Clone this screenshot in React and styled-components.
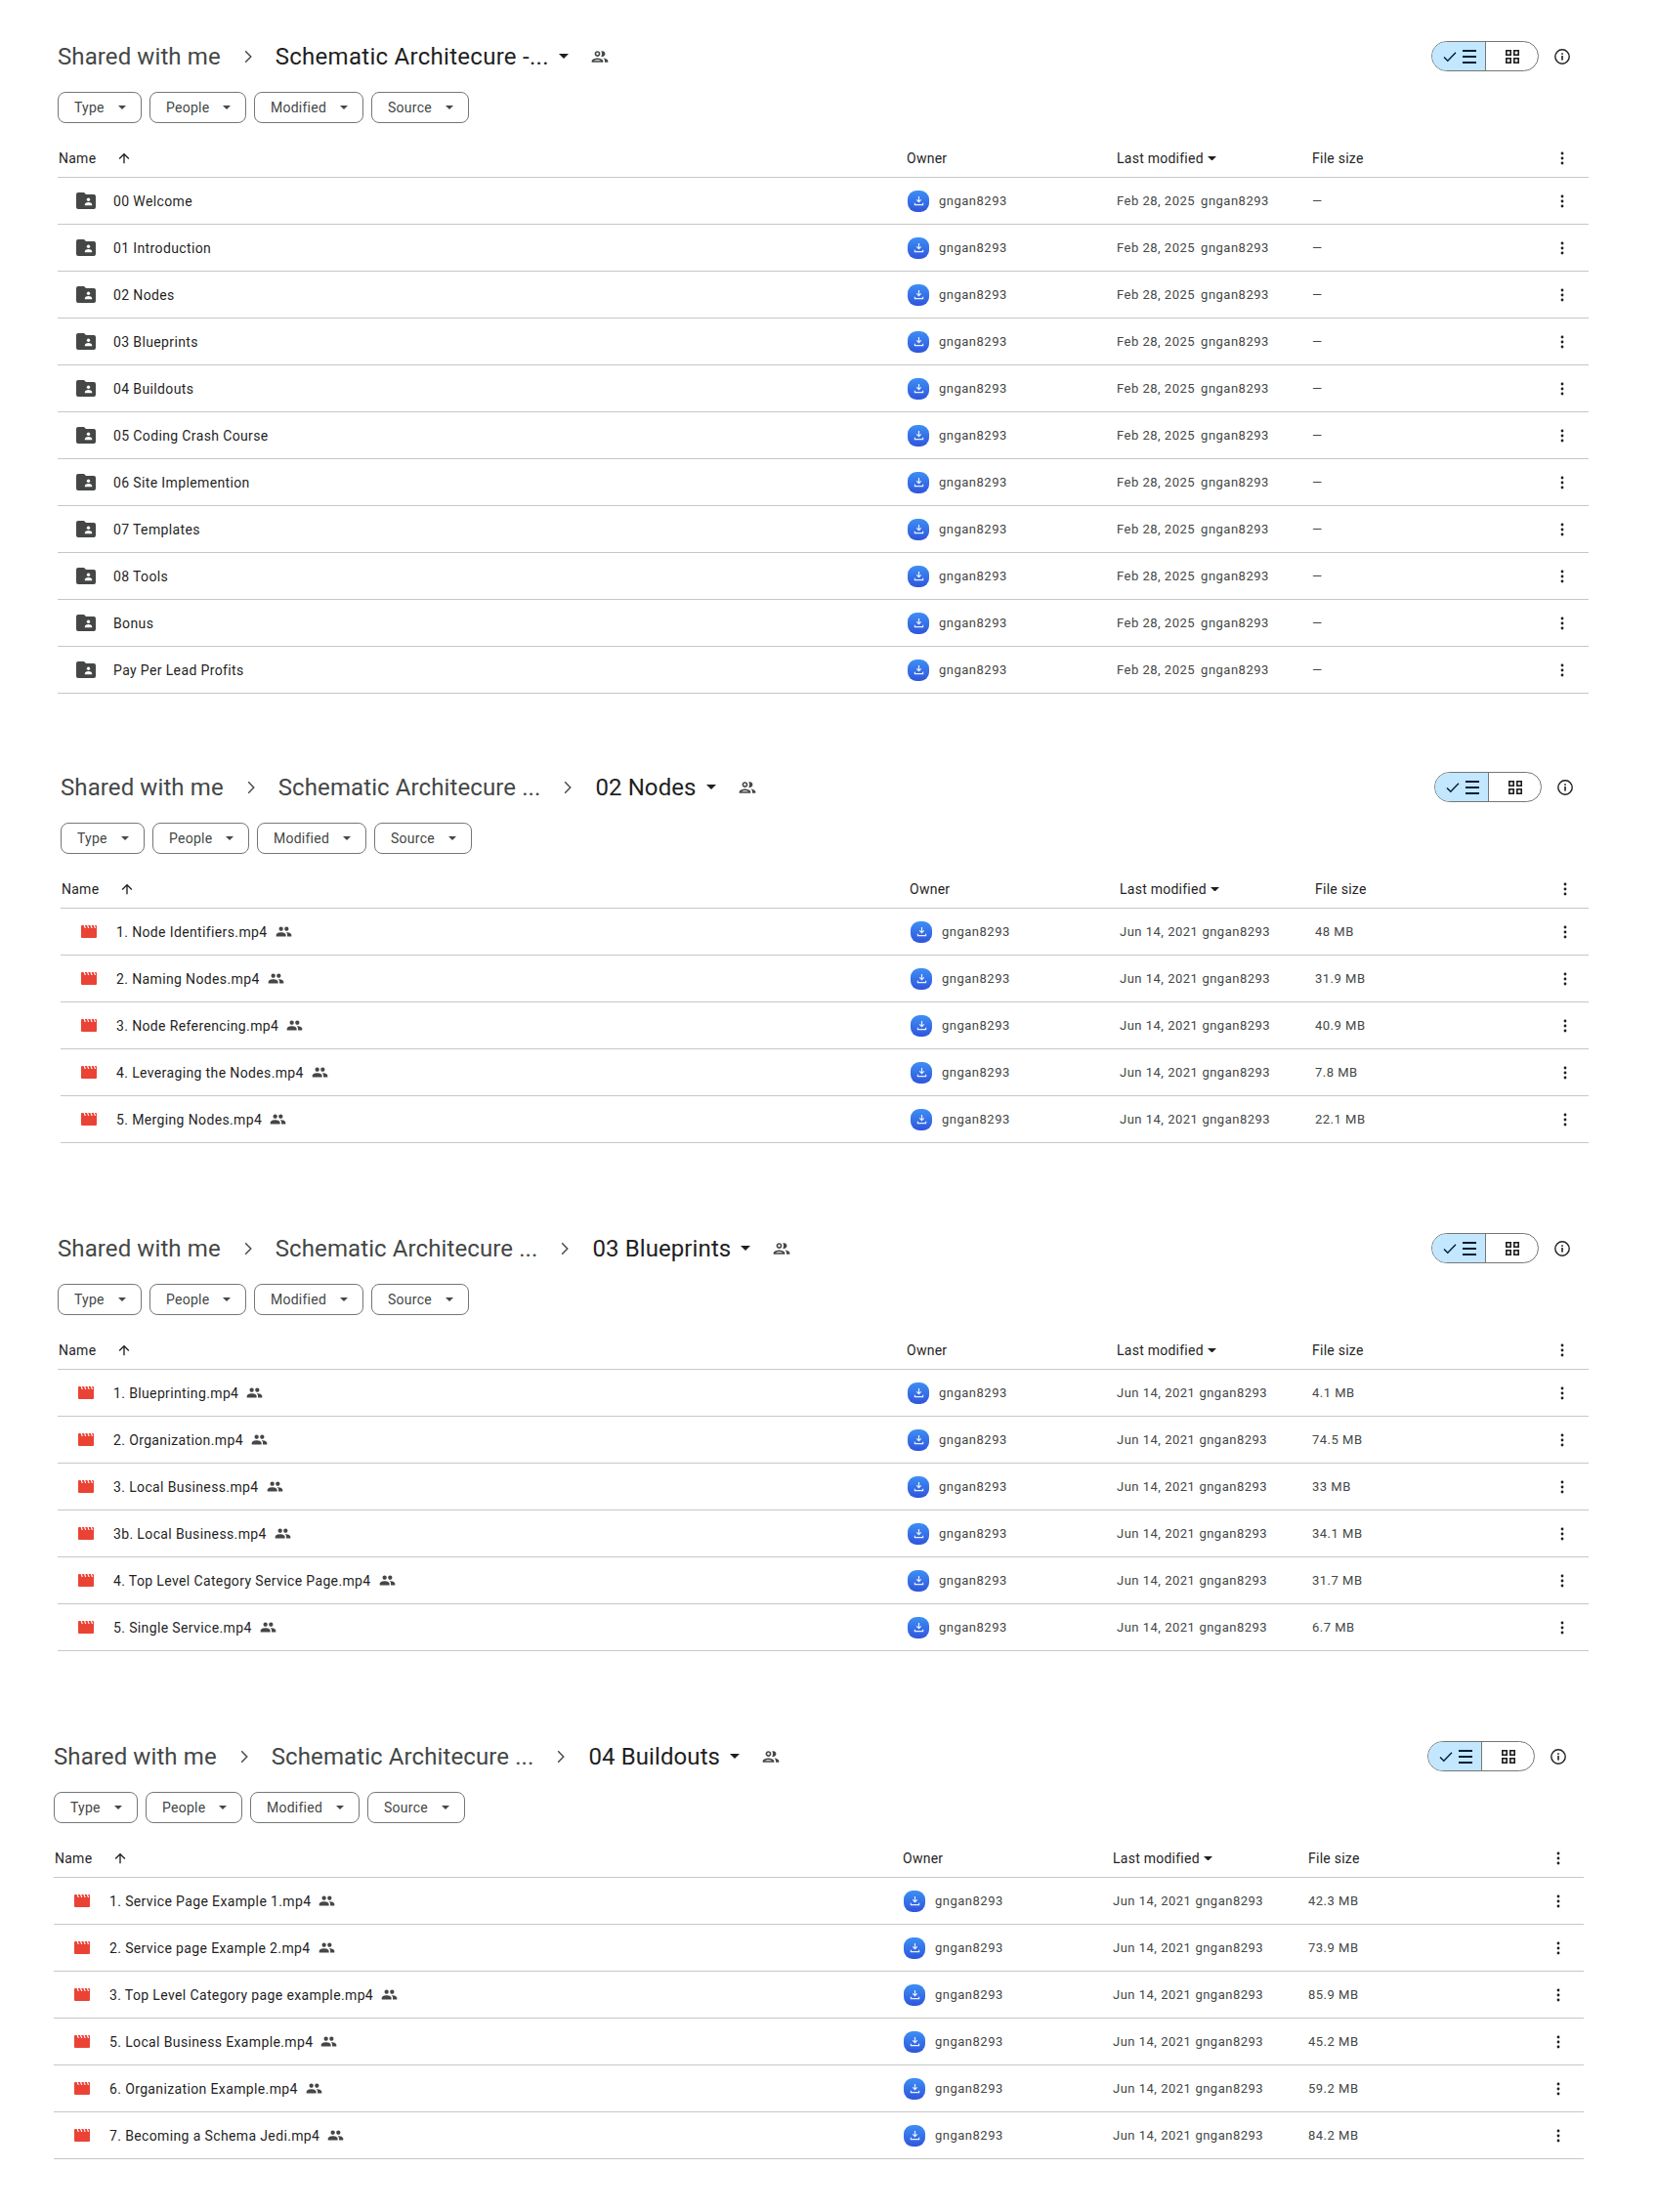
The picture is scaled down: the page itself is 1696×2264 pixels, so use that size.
import React from "react";
import styled, { createGlobalStyle } from "styled-components";

const GlobalStyle = createGlobalStyle`
  html, body {
    margin: 0;
    padding: 0;
    background: #fff;
    font-family: Roboto, "Liberation Sans", sans-serif;
  }
`;

const Page = styled.div`
  width: 1696px;
  height: 2264px;
  padding-top: 42px;
  box-sizing: border-box;
  overflow: hidden;
`;

const Section = styled.section`
  margin-top: ${(p) => p.$top}px;
  padding-left: ${(p) => p.$left}px;
  padding-right: ${(p) => p.$right}px;
`;

const TitleRow = styled.div`
  display: flex;
  align-items: center;
  height: 31px;
  padding-right: ${(p) => p.$kebab / 2 - 8}px;
`;

const Crumb = styled.span`
  font-size: 24px;
  letter-spacing: ${(p) => p.$spacing}px;
  line-height: 31px;
  padding-top: 1px;
  white-space: nowrap;
  color: ${(p) => (p.$current ? "#1f1f1f" : "#444746")};
`;

const ChevronBox = styled.span`
  width: 56px;
  display: flex;
  justify-content: center;
  color: #444746;
`;

const TitleCaret = styled.span`
  margin-left: 10px;
  display: flex;
  color: #1f1f1f;
`;

const ShareIcon = styled.span`
  margin-left: 22px;
  display: flex;
  color: #444746;
`;

const Spacer = styled.div`
  flex: 1;
`;

const Toggle = styled.div`
  display: flex;
  width: 110px;
  height: 31px;
  box-sizing: border-box;
  border: 1px solid #747775;
  border-radius: 16px;
  overflow: hidden;
  margin-right: 16px;
`;

const ToggleOn = styled.div`
  width: 55px;
  background: #c2e7ff;
  border-right: 1px solid #747775;
  display: flex;
  align-items: center;
  justify-content: center;
  gap: 6px;
  padding-left: 2px;
  box-sizing: border-box;
  color: #001d35;
`;

const ToggleOff = styled.div`
  flex: 1;
  display: flex;
  align-items: center;
  justify-content: center;
  color: #1f1f1f;
`;

const InfoBox = styled.span`
  display: flex;
  width: 16px;
  color: #1f1f1f;
`;

const Filters = styled.div`
  display: flex;
  gap: 8px;
  margin-top: 21px;
`;

const Chip = styled.div`
  height: 32px;
  width: ${(p) => p.$width}px;
  box-sizing: border-box;
  border: 1px solid #747775;
  border-radius: 8px;
  display: flex;
  align-items: center;
  justify-content: space-between;
  padding: 0 15px 0 16px;
  font-size: 14px;
  letter-spacing: 0.25px;
  color: #444746;
`;

const ChipCaret = styled.span`
  display: flex;
  color: #444746;
`;

const HeaderRow = styled.div`
  display: grid;
  grid-template-columns: 869px 215px 200px 1fr ${(p) => p.$kebab}px;
  height: 56px;
  box-sizing: border-box;
  align-items: end;
  padding-bottom: 9px;
  border-bottom: 1px solid #c7c7c7;
  font-size: 14px;
  letter-spacing: 0.25px;
  line-height: 20px;
  color: #1f1f1f;
`;

const HeaderName = styled.div`
  display: flex;
  align-items: center;
  gap: 21px;
  padding-left: 1px;
`;

const HeaderSort = styled.div`
  display: flex;
  align-items: center;
  gap: 4px;
`;

const Row = styled.div`
  display: grid;
  grid-template-columns: 869px 215px 200px 1fr ${(p) => p.$kebab}px;
  height: 48px;
  box-sizing: border-box;
  align-items: center;
  border-bottom: 1px solid #c7c7c7;
  font-size: 13px;
  letter-spacing: 0.5px;
  color: #444746;
`;

const NameCell = styled.div`
  display: flex;
  align-items: center;
  font-size: 14px;
  letter-spacing: 0.37px;
  color: #1f1f1f;
`;

const IconSlot = styled.span`
  width: 57px;
  padding-left: 1px;
  box-sizing: border-box;
  display: flex;
  justify-content: center;
`;

const SharedMark = styled.span`
  display: flex;
  margin-left: 8px;
  color: #444746;
`;

const OwnerCell = styled.div`
  display: flex;
  align-items: center;
`;

const Avatar = styled.span`
  width: 22px;
  height: 22px;
  margin: 0 10px 0 1px;
  border-radius: 9px;
  background: linear-gradient(180deg, #3d8ff5 0%, #2f55dc 100%);
  display: flex;
  align-items: center;
  justify-content: center;
`;

const DateCell = styled.div`
  display: flex;
  gap: ${(p) => p.$gap}px;
`;

const KebabCell = styled.div`
  display: flex;
  align-items: center;
  justify-content: center;
  height: 20px;
  color: #1f1f1f;
`;

const PEOPLE =
  "M16 11c1.66 0 2.99-1.34 2.99-3S17.66 5 16 5c-1.66 0-3 1.34-3 3s1.34 3 3 3zm-8 0c1.66 0 2.99-1.34 2.99-3S9.66 5 8 5C6.34 5 5 6.34 5 8s1.34 3 3 3zm0 2c-2.33 0-7 1.17-7 3.5V19h14v-2.5c0-2.33-4.67-3.5-7-3.5zm8 0c-.29 0-.62.02-.97.05 1.16.84 1.97 1.97 1.97 3.45V19h6v-2.5c0-2.33-4.67-3.5-7-3.5z";
const PEOPLE_OUTLINE =
  "M9 13.75c-2.34 0-7 1.17-7 3.5V19h14v-1.75c0-2.33-4.66-3.5-7-3.5zM4.34 17c.84-.58 2.87-1.25 4.66-1.25s3.82.67 4.66 1.25H4.34zM9 12c1.93 0 3.5-1.57 3.5-3.5S10.93 5 9 5 5.5 6.57 5.5 8.5 7.07 12 9 12zm0-5c.83 0 1.5.67 1.5 1.5S9.83 10 9 10s-1.5-.67-1.5-1.5S8.17 7 9 7zm7.04 6.81c1.16.84 1.96 1.96 1.96 3.44V19h4v-1.75c0-2.02-3.5-3.17-5.96-3.44zM15 12c1.93 0 3.5-1.57 3.5-3.5S16.93 5 15 5c-.54 0-1.04.13-1.5.35.63.89 1 1.98 1 3.15s-.37 2.26-1 3.15c.46.22.96.35 1.5.35z";

const Caret = ({ w = 8 }) => (
  <svg width={w} height={w / 2} viewBox="0 0 10 5" fill="currentColor">
    <path d="M0 0h10L5 5z" />
  </svg>
);

const Chevron = () => (
  <svg width="8" height="14" viewBox="0 0 8 14" fill="none" stroke="currentColor" strokeWidth="1.4">
    <path d="M1.2 1.2 6.8 7l-5.6 5.8" />
  </svg>
);

const People = ({ d = PEOPLE, size = 17 }) => (
  <svg width={size} height={size} viewBox="0 0 24 24" fill="currentColor">
    <path d={d} />
  </svg>
);

const FolderIcon = () => (
  <svg width="20" height="17" viewBox="0 0 20 17">
    <path
      fill="#444746"
      d="M2 0h6l2 2h8a2 2 0 0 1 2 2v11a2 2 0 0 1-2 2H2a2 2 0 0 1-2-2V2a2 2 0 0 1 2-2z"
    />
    <circle cx="12.5" cy="7.2" r="1.7" fill="#fff" />
    <path fill="#fff" d="M8.8 12.4c0-1.5 2.4-2.3 3.7-2.3s3.7.8 3.7 2.3v.8H8.8z" />
  </svg>
);

const VideoIcon = () => (
  <svg width="16" height="13" viewBox="0 0 16 13">
    <path fill="#ea4335" d="M1 0h14a1 1 0 0 1 1 1v11a1 1 0 0 1-1 1H1a1 1 0 0 1-1-1V1a1 1 0 0 1 1-1z" />
    <path fill="#fff" d="M2.6 0h1.2l1.100 3H3.700zM6 0h1.200l1.100 3H7.100zM9.400 0h1.200l1.100 3h-1.200zM12.800 0H14l1.100 3h-1.200z" />
  </svg>
);

const DownloadIcon = () => (
  <svg width="11" height="11" viewBox="0 0 12 12" fill="none" stroke="#e8f0fe" strokeWidth="1.300">
    <path d="M6 1v6M3.500 4.800 6 7.200l2.500-2.400M1.500 8.500v2h9v-2" />
  </svg>
);

const Kebab = () => (
  <svg width="4" height="14" viewBox="0 0 4 14" fill="currentColor">
    <circle cx="2" cy="2" r="1.400" />
    <circle cx="2" cy="7" r="1.400" />
    <circle cx="2" cy="12" r="1.400" />
  </svg>
);

const CheckIcon = () => (
  <svg width="14" height="12" viewBox="0 0 14 12" fill="none" stroke="currentColor" strokeWidth="1.400">
    <path d="M1 6.500 4.800 10.300 13 1.800" />
  </svg>
);

const ListIcon = () => (
  <svg width="14" height="14" viewBox="0 0 14 14" fill="currentColor">
    <path d="M0 0h14v2H0zM0 6h14v2H0zM0 12h14v2H0z" />
  </svg>
);

const GridIcon = () => (
  <svg width="14" height="14" viewBox="0 0 14 14" fill="none" stroke="currentColor" strokeWidth="1.600">
    <rect x="0.800" y="0.800" width="4.400" height="4.400" />
    <rect x="8.800" y="0.800" width="4.400" height="4.400" />
    <rect x="0.800" y="8.800" width="4.400" height="4.400" />
    <rect x="8.800" y="8.800" width="4.400" height="4.400" />
  </svg>
);

const InfoIcon = () => (
  <svg width="16" height="16" viewBox="0 0 16 16" fill="none">
    <circle cx="8" cy="8" r="7.200" stroke="currentColor" strokeWidth="1.400" />
    <rect x="7.200" y="7" width="1.600" height="4.600" fill="currentColor" />
    <rect x="7.200" y="4.300" width="1.600" height="1.600" fill="currentColor" />
  </svg>
);

const ArrowUp = () => (
  <svg width="16" height="16" viewBox="0 0 24 24" fill="currentColor">
    <path d="M4 12l1.410 1.410L11 7.830V20h2V7.830l5.580 5.590L20 12l-8-8-8 8z" />
  </svg>
);

const CHIPS = [
  ["Type", 86],
  ["People", 99],
  ["Modified", 112],
  ["Source", 100],
];

const folders = [
  "00 Welcome",
  "01 Introduction",
  "02 Nodes",
  "03 Blueprints",
  "04 Buildouts",
  "05 Coding Crash Course",
  "06 Site Implemention",
  "07 Templates",
  "08 Tools",
  "Bonus",
  "Pay Per Lead Profits",
].map((name) => ({ name, date: "Feb 28, 2025", size: "—", folder: true }));

const videos = (list) =>
  list.map(([name, size]) => ({ name, size, date: "Jun 14, 2021" }));

const SECTIONS = [
  {
    top: 0,
    left: 59,
    right: 70,
    kebab: 54,
    spacing: 0.28,
    crumbs: ["Shared with me", "Schematic Architecure -..."],
    rows: folders,
  },
  {
    top: 80,
    left: 62,
    right: 70,
    kebab: 48,
    spacing: 0.1,
    crumbs: ["Shared with me", "Schematic Architecure ...", "02 Nodes"],
    rows: videos([
      ["1. Node Identifiers.mp4", "48 MB"],
      ["2. Naming Nodes.mp4", "31.9 MB"],
      ["3. Node Referencing.mp4", "40.9 MB"],
      ["4. Leveraging the Nodes.mp4", "7.8 MB"],
      ["5. Merging Nodes.mp4", "22.1 MB"],
    ]),
  },
  {
    top: 92,
    left: 59,
    right: 70,
    kebab: 54,
    spacing: 0.1,
    crumbs: ["Shared with me", "Schematic Architecure ...", "03 Blueprints"],
    rows: videos([
      ["1. Blueprinting.mp4", "4.1 MB"],
      ["2. Organization.mp4", "74.5 MB"],
      ["3. Local Business.mp4", "33 MB"],
      ["3b. Local Business.mp4", "34.1 MB"],
      ["4. Top Level Category Service Page.mp4", "31.7 MB"],
      ["5. Single Service.mp4", "6.7 MB"],
    ]),
  },
  {
    top: 92,
    left: 55,
    right: 75,
    kebab: 52,
    spacing: 0.1,
    crumbs: ["Shared with me", "Schematic Architecure ...", "04 Buildouts"],
    rows: videos([
      ["1. Service Page Example 1.mp4", "42.3 MB"],
      ["2. Service page Example 2.mp4", "73.9 MB"],
      ["3. Top Level Category page example.mp4", "85.9 MB"],
      ["5. Local Business Example.mp4", "45.2 MB"],
      ["6. Organization Example.mp4", "59.2 MB"],
      ["7. Becoming a Schema Jedi.mp4", "84.2 MB"],
    ]),
  },
];

function FileRow({ row, kebab }) {
  return (
    <Row $kebab={kebab}>
      <NameCell>
        <IconSlot>{row.folder ? <FolderIcon /> : <VideoIcon />}</IconSlot>
        {row.name}
        {!row.folder && (
          <SharedMark>
            <People />
          </SharedMark>
        )}
      </NameCell>
      <OwnerCell>
        <Avatar>
          <DownloadIcon />
        </Avatar>
        gngan8293
      </OwnerCell>
      <DateCell $gap={row.folder ? 6 : 4}>
        <span>{row.date}</span>
        <span>gngan8293</span>
      </DateCell>
      <div>{row.size}</div>
      <KebabCell>
        <Kebab />
      </KebabCell>
    </Row>
  );
}

function DriveSection({ data }) {
  const { top, left, right, kebab, spacing, crumbs, rows } = data;
  return (
    <Section $top={top} $left={left} $right={right}>
      <TitleRow $kebab={kebab}>
        {crumbs.map((c, i) => (
          <React.Fragment key={c}>
            {i > 0 && (
              <ChevronBox>
                <Chevron />
              </ChevronBox>
            )}
            <Crumb $current={i === crumbs.length - 1} $spacing={i === 0 ? 0.1 : spacing}>
              {c}
            </Crumb>
          </React.Fragment>
        ))}
        <TitleCaret>
          <Caret w={10} />
        </TitleCaret>
        <ShareIcon>
          <People d={PEOPLE_OUTLINE} size={20} />
        </ShareIcon>
        <Spacer />
        <Toggle>
          <ToggleOn>
            <CheckIcon />
            <ListIcon />
          </ToggleOn>
          <ToggleOff>
            <GridIcon />
          </ToggleOff>
        </Toggle>
        <InfoBox>
          <InfoIcon />
        </InfoBox>
      </TitleRow>
      <Filters>
        {CHIPS.map(([label, width]) => (
          <Chip key={label} $width={width}>
            {label}
            <ChipCaret>
              <Caret />
            </ChipCaret>
          </Chip>
        ))}
      </Filters>
      <HeaderRow $kebab={kebab}>
        <HeaderName>
          Name
          <ArrowUp />
        </HeaderName>
        <div>Owner</div>
        <HeaderSort>
          Last modified
          <Caret w={9} />
        </HeaderSort>
        <div>File size</div>
        <KebabCell>
          <Kebab />
        </KebabCell>
      </HeaderRow>
      {rows.map((r) => (
        <FileRow key={r.name} row={r} kebab={kebab} />
      ))}
    </Section>
  );
}

export default function App() {
  return (
    <Page>
      <GlobalStyle />
      {SECTIONS.map((s, i) => (
        <DriveSection key={i} data={s} />
      ))}
    </Page>
  );
}
